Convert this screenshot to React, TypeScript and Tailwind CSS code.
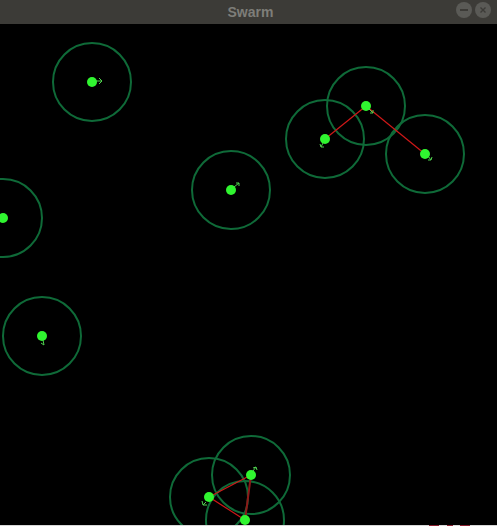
import React from "react";

const circles: [number, number][] = [
  [92, 82],
  [366, 106],
  [325, 139],
  [425, 154],
  [231, 190],
  [3, 218],
  [42, 336],
  [209, 497],
  [251, 475],
  [245, 520],
];

const arrows: { x: number; y: number; d: string }[] = [
  { x: 92, y: 82, d: "M96 81 L102 81 M99 78 L102 81 L99 84" },
  { x: 366, y: 106, d: "M369 109 L373 113 M370 113 L373 113 L373 110" },
  { x: 325, y: 139, d: "M323 143 L321 147 M320 144 L321 147 L324 147" },
  { x: 425, y: 154, d: "M428 156 L431 160 M428 160 L431 160 L432 157" },
  { x: 231, y: 190, d: "M234 187 L239 183 M236 183 L239 183 L239 186" },
  { x: 42, y: 336, d: "M43 340 L44 345 M41 343 L44 345" },
  { x: 209, y: 497, d: "M206 502 L203 505 M202 501 L203 505 L207 505" },
  { x: 251, y: 475, d: "M253 471 L256 467 M253 468 L256 467 L257 470" },
];

export default function App() {
  return (
    <div className="w-[497px] h-[526px] flex flex-col bg-black overflow-hidden">
      <div className="h-6 shrink-0 bg-[#3c3b37] flex items-center relative">
        <div
          className="flex-1 text-center text-[14px] font-bold text-[#7e7e79] leading-none pl-[4px]"
          style={{ fontFamily: "'Liberation Sans', Arial, sans-serif" }}
        >
          Swarm
        </div>
        <div className="absolute right-[6px] top-[2px] flex gap-[3px]">
          <div className="w-4 h-4 rounded-full bg-[#5a5a56] flex items-center justify-center">
            <div className="w-[8px] h-[2px] bg-[#3c3b37]" />
          </div>
          <div className="w-4 h-4 rounded-full bg-[#5a5a56] flex items-center justify-center">
            <svg width="8" height="8" viewBox="0 0 8 8">
              <path d="M1.5 1.5 L6.5 6.5 M6.5 1.5 L1.5 6.5" stroke="#3c3b37" strokeWidth="1.4" />
            </svg>
          </div>
        </div>
      </div>
      <div className="flex-1 relative">
        <svg width="497" height="501" viewBox="0 24 497 501" className="block">
          {circles.map(([x, y], i) => (
            <circle key={"c" + i} cx={x} cy={y} r={39} fill="none" stroke="#0f6a38" strokeWidth={2} />
          ))}
          <g stroke="#d01818" strokeWidth={1.2}>
            <line x1={325} y1={139} x2={366} y2={106} />
            <line x1={366} y1={106} x2={425} y2={154} />
            <line x1={209} y1={497} x2={251} y2={475} />
            <line x1={209} y1={497} x2={245} y2={520} />
          </g>
          <line x1={251} y1={475} x2={245} y2={520} stroke="#8e1818" strokeWidth={2} />
          {circles.map(([x, y], i) => (
            <circle key={"d" + i} cx={x} cy={y} r={5} fill="#30f530" />
          ))}
          {arrows.map((a, i) => (
            <path key={"a" + i} d={a.d} fill="none" stroke="#4fd24f" strokeWidth={1} />
          ))}
        </svg>
      </div>
      <div className="h-px shrink-0 bg-[#d8d8d8] flex">
        <div className="ml-[429px] w-[10px] bg-[#8a2030]" />
        <div className="ml-[8px] w-[6px] bg-[#8a2030]" />
        <div className="ml-[7px] w-[10px] bg-[#8a2030]" />
      </div>
    </div>
  );
}
